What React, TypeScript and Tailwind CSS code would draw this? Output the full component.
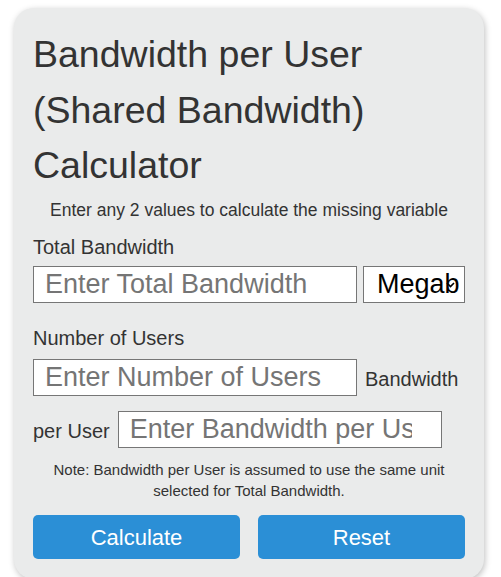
import React from "react";

export default function App() {
  return (
    <div className="min-h-[577px] bg-white pl-[14px] pt-[8px] font-['Liberation_Sans',Arial,sans-serif]">
      <div className="w-[470px] rounded-[20px] bg-[#eaebeb] px-[19px] pb-[20px] pt-[19px] text-[#333] shadow-[1px_2px_6px_rgba(0,0,0,0.25)]">
        <h1 className="text-[37.5px] font-normal leading-[55.5px]">
          Bandwidth per User (Shared Bandwidth) Calculator
        </h1>
        <p className="mt-[6.5px] text-center text-[17.5px] leading-[20px]">
          Enter any 2 values to calculate the missing variable
        </p>

        <label className="mt-[16px] block text-[20px] leading-[23px]">Total Bandwidth</label>
        <div className="mt-[7px] flex gap-[6px]">
          <input
            type="text"
            placeholder="Enter Total Bandwidth"
            className="h-[37px] w-[324px] border border-[#767676] bg-white pl-[11px] pr-[29px] text-[27px] outline-none placeholder:text-[#757575]"
          />
          <div className="relative h-[37px] w-[102px] border border-[#767676] bg-white">
            <div className="h-full w-[95px] overflow-hidden whitespace-nowrap pl-[13px] text-[27px] leading-[35px] text-black">
              Megabits
            </div>
            <svg
              className="absolute right-[9px] top-[15px]"
              width="9"
              height="6"
              viewBox="0 0 9 6"
              fill="none"
            >
              <path d="M1 1L4.5 4.5L8 1" stroke="#000" strokeWidth="1.6" />
            </svg>
          </div>
        </div>

        <label className="mt-[24px] block text-[20px] leading-[23px]">Number of Users</label>
        <div className="mt-[9px] flex items-baseline">
          <input
            type="text"
            placeholder="Enter Number of Users"
            className="h-[37px] w-[324px] border border-[#767676] bg-white pl-[11px] pr-[29px] text-[27px] outline-none placeholder:text-[#757575]"
          />
          <span className="ml-[8px] text-[20px] leading-[23px]">Bandwidth</span>
        </div>
        <div className="mt-[15px] flex items-baseline">
          <span className="text-[20px] leading-[23px]">per User</span>
          <input
            type="text"
            placeholder="Enter Bandwidth per User"
            className="ml-[8px] h-[37px] w-[324px] border border-[#767676] bg-white pl-[11px] pr-[29px] text-[27px] outline-none placeholder:text-[#757575]"
          />
        </div>

        <p className="mx-auto mt-[11px] w-[400px] text-center text-[15px] leading-[21px]">
          Note: Bandwidth per User is assumed to use the same unit selected for Total Bandwidth.
        </p>

        <div className="mt-[14px] grid grid-cols-2 gap-[18px]">
          <button className="h-[44px] rounded-[5px] bg-[#2b8fd6] text-[22px] text-white">
            Calculate
          </button>
          <button className="h-[44px] rounded-[5px] bg-[#2b8fd6] text-[22px] text-white">
            Reset
          </button>
        </div>
      </div>
    </div>
  );
}
